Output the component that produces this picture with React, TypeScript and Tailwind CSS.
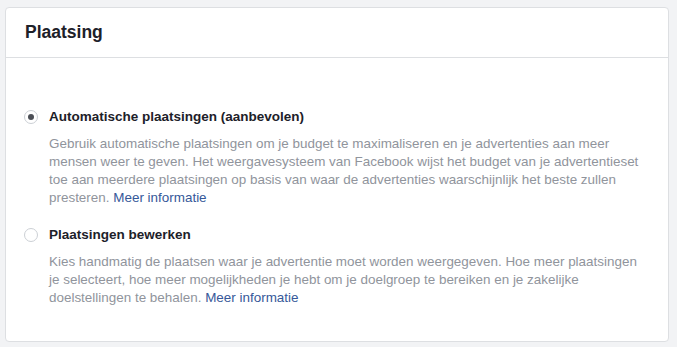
import React from "react";

function Radio({ checked }: { checked?: boolean }) {
  return (
    <div className="mt-[2px] flex h-[14px] w-[14px] shrink-0 items-center justify-center rounded-full border border-[#ccd0d5] bg-white">
      {checked && <div className="h-[6px] w-[6px] rounded-full bg-[#4b4f56]" />}
    </div>
  );
}

function Option({
  checked,
  label,
  desc,
}: {
  checked?: boolean;
  label: string;
  desc: string;
}) {
  return (
    <div className="flex gap-[11px]">
      <Radio checked={checked} />
      <div className="flex min-w-0 flex-1 flex-col">
        <div className="text-[13.5px] font-bold leading-[18px] text-[#1d2129]">{label}</div>
        <div className="mt-[9px] text-[13.45px] leading-[18px] text-[#90949c]">
          {desc} <span className="text-[#365899]">Meer informatie</span>
        </div>
      </div>
    </div>
  );
}

export default function App() {
  return (
    <div
      className="h-[347px] w-[677px] bg-[#f2f3f5] pl-[5px] pt-[7px]"
      style={{ fontFamily: '"Liberation Sans", Arial, sans-serif' }}
    >
      <div className="flex h-[335px] w-[664px] flex-col rounded-[4px] border border-[#dddfe2] bg-white">
        <div className="flex h-[50px] items-center border-b border-[#dddfe2] pl-[19px] text-[17.5px] font-bold text-[#1d2129]">
          Plaatsing
        </div>
        <div className="flex flex-col gap-[19px] pl-[18px] pr-[17px] pt-[50px]">
          <Option
            checked
            label="Automatische plaatsingen (aanbevolen)"
            desc="Gebruik automatische plaatsingen om je budget te maximaliseren en je advertenties aan meer mensen weer te geven. Het weergavesysteem van Facebook wijst het budget van je advertentieset toe aan meerdere plaatsingen op basis van waar de advertenties waarschijnlijk het beste zullen presteren."
          />
          <Option
            label="Plaatsingen bewerken"
            desc="Kies handmatig de plaatsen waar je advertentie moet worden weergegeven. Hoe meer plaatsingen je selecteert, hoe meer mogelijkheden je hebt om je doelgroep te bereiken en je zakelijke doelstellingen te behalen."
          />
        </div>
      </div>
    </div>
  );
}
